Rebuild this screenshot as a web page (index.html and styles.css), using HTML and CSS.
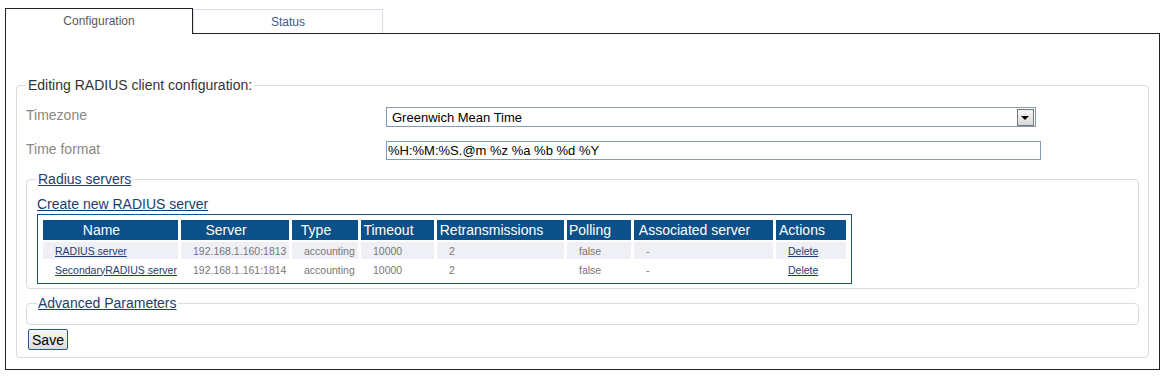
FILE: index.html
```html
<!DOCTYPE html>
<html lang="en">
<head>
  <meta charset="utf-8">
  <title>RADIUS client</title>
  <link rel="stylesheet" href="styles.css">
</head>
<body>
  <div class="tabs">
    <div class="tab active">Configuration</div>
    <div class="tab">Status</div>
  </div>
  <div class="panel">
    <fieldset class="group">
      <legend>Editing RADIUS client configuration:</legend>

      <div class="row first">
        <label class="label">Timezone</label>
        <div class="select"><span>Greenwich Mean Time</span><span class="drop"></span></div>
      </div>
      <div class="row">
        <label class="label">Time format</label>
        <input class="text" type="text" value="%H:%M:%S.@m %z %a %b %d %Y">
      </div>

      <fieldset class="sub">
        <legend><a href="#">Radius servers</a></legend>
        <a class="create" href="#">Create new RADIUS server</a>
        <div class="grid">
          <table>
            <tr>
              <th class="c-name">Name</th>
              <th class="c-server">Server</th>
              <th class="c-type">Type</th>
              <th class="c-timeout">Timeout</th>
              <th class="c-retr">Retransmissions</th>
              <th class="c-poll">Polling</th>
              <th class="c-assoc">Associated server</th>
              <th class="c-act">Actions</th>
            </tr>
            <tr class="odd">
              <td><a href="#">RADIUS server</a></td>
              <td>192.168.1.160:1813</td>
              <td>accounting</td>
              <td>10000</td>
              <td>2</td>
              <td>false</td>
              <td>-</td>
              <td><a href="#">Delete</a></td>
            </tr>
            <tr>
              <td><a href="#">SecondaryRADIUS server</a></td>
              <td>192.168.1.161:1814</td>
              <td>accounting</td>
              <td>10000</td>
              <td>2</td>
              <td>false</td>
              <td>-</td>
              <td><a href="#">Delete</a></td>
            </tr>
          </table>
        </div>
      </fieldset>

      <fieldset class="sub adv">
        <legend><a href="#">Advanced Parameters</a></legend>
      </fieldset>

      <button class="save" type="button">Save</button>
    </fieldset>
  </div>
</body>
</html>
```

FILE: styles.css
```css
body {
  margin: 8px 4px 0 5px;
  font-family: "Liberation Sans", Arial, sans-serif;
  background: #fff;
}

.tabs {
  display: flex;
  align-items: flex-end;
  margin-bottom: -1px;
}
.tab {
  box-sizing: border-box;
  text-align: center;
  font-size: 12px;
}
.tab.active {
  position: relative;
  z-index: 1;
  width: 188px;
  height: 26px;
  line-height: 24px;
  border: 1px solid #222;
  border-bottom: none;
  background: #fff;
  color: #5a5a5a;
}
.tab + .tab {
  width: 190px;
  height: 24px;
  line-height: 24px;
  margin-bottom: 1px;
  border: 1px solid #dadde6;
  border-bottom: none;
  color: #3a5a85;
}

.panel {
  border: 1px solid #222;
  padding: 43px 10px 11px 10px;
}

fieldset {
  margin: 0;
  border: 1px solid #d5dde5;
  border-radius: 4px;
}
legend {
  font-size: 14px;
  line-height: 16px;
}
a {
  color: #1d3d70;
}

.group {
  padding: 0 9px 7px 9px;
}
.group > legend {
  padding: 0 2px;
  color: #333;
}

.row {
  display: flex;
  align-items: flex-start;
  margin-top: 14px;
}
.label {
  width: 360px;
  font-size: 14px;
  line-height: 16px;
  color: #888;
}
.select {
  box-sizing: border-box;
  display: flex;
  align-items: center;
  justify-content: space-between;
  width: 650px;
  height: 20px;
  padding-left: 5px;
  border: 1px solid #7f9db9;
  font-size: 13px;
  color: #000;
}
.drop {
  position: relative;
  box-sizing: border-box;
  width: 17px;
  height: 17px;
  margin-right: 1px;
  border: 1px solid #777;
  background: linear-gradient(#f6f6f6, #d9d9d9);
}
.drop::after {
  content: "";
  position: absolute;
  left: 3px;
  top: 6px;
  border-left: 4px solid transparent;
  border-right: 4px solid transparent;
  border-top: 4px solid #000;
}
.text {
  box-sizing: border-box;
  width: 655px;
  height: 19px;
  margin: 0;
  padding: 0 1px;
  border: 1px solid #7f9db9;
  font-family: "Liberation Sans", Arial, sans-serif;
  font-size: 13px;
  color: #000;
}

.sub {
  margin-top: 11px;
  padding: 0 9px 4px 10px;
}
.sub > legend {
  padding: 0 1px;
}
.create {
  display: block;
  width: max-content;
  margin-top: 9px;
  font-size: 14px;
  line-height: 16px;
}

.grid {
  width: max-content;
  margin-top: 2px;
  padding: 3px 2px;
  border: 1px solid #1a5685;
}
.grid table {
  table-layout: fixed;
  border-spacing: 3px 2px;
  width: 809px;
}
th {
  box-sizing: border-box;
  height: 20px;
  padding: 0 18px 0 0;
  background: #0b5088;
  color: #fff;
  font-size: 14px;
  font-weight: normal;
  text-align: center;
  white-space: nowrap;
}
.c-name { width: 135px; }
.c-server { width: 108px; }
.c-type { width: 66px; }
.c-timeout { width: 73px; }
.c-retr { width: 127px; }
.c-poll { width: 64px; }
.c-assoc { width: 139px; }
.c-act { width: 70px; }

td {
  height: 17px;
  padding: 0 0 0 12px;
  font-size: 10.5px;
  color: #777;
  white-space: nowrap;
}
.odd td {
  background: #eef0f5;
}
td a {
  color: #1d3d70;
}

.sub.adv {
  margin-top: 6px;
  padding-bottom: 13px;
}

.save {
  display: block;
  margin: 4px 0 0 2px;
  width: 40px;
  height: 21px;
  padding: 0;
  border: 1px solid #1f5b8e;
  border-radius: 2px;
  background: linear-gradient(#f7f7f7, #dcdcdc);
  font-family: "Liberation Sans", Arial, sans-serif;
  font-size: 14px;
  color: #000;
}
```
